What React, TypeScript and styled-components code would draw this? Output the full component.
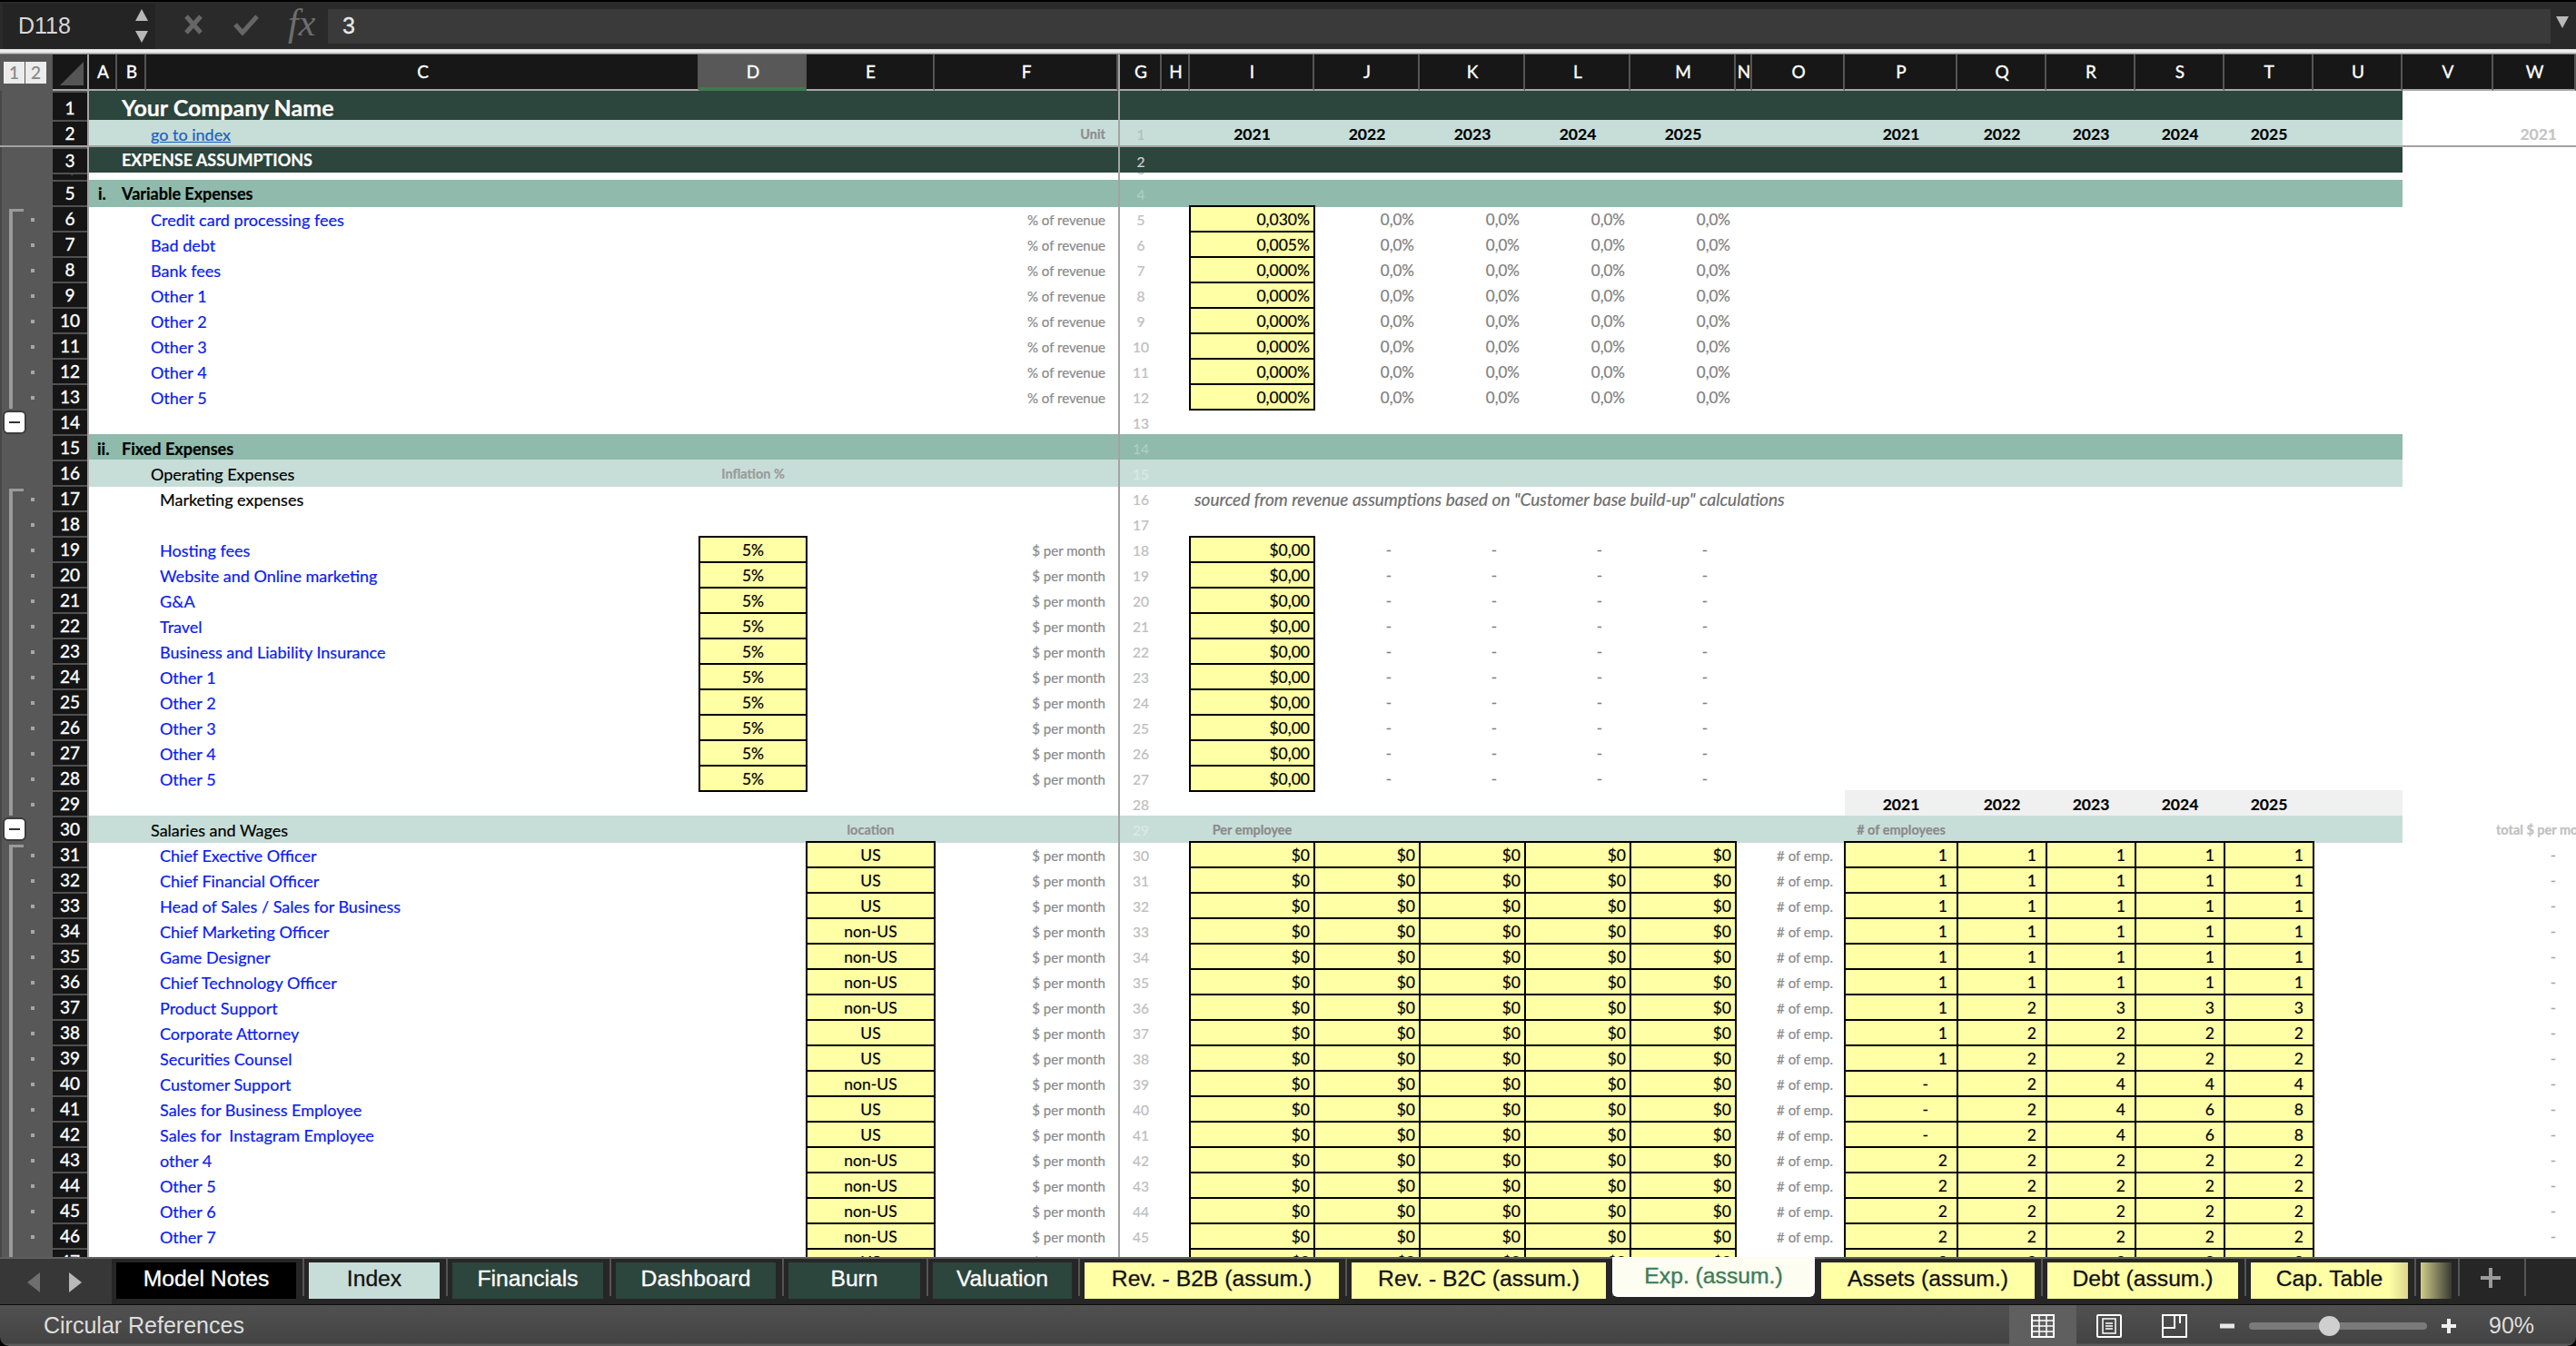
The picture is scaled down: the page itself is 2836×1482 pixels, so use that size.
import React from 'react'
import styled, { createGlobalStyle } from 'styled-components'

const COLS = `[gut] 58px [num] 38px [seam] 2px [A] 31px [B] 32px [C] 609px [D] 118px [E] 141px [F] 202px [G] 48px [H] 31px [I] 137px [J] 116px [K] 116px [L] 116px [M] 116px [N] 18px [O] 102px [P] 124px [Q] 98px [R] 98px [S] 98px [T] 98px [U] 98px [V] 100px [W] 91px [end]`
const LETTERS = 'ABCDEFGHIJKLMNOPQRSTUVW'.split('')
const SHEET_FONT = `Lato, 'Noto Sans', sans-serif`
const UI_FONT = `'Liberation Sans', Arial, sans-serif`

const DARK = '#2c453d'
const MID = '#8fbaac'
const PALE = '#c7ded8'
const YELLOW = '#ffffa6'
const GUTTER = '#585858'

const Global = createGlobalStyle`
  html, body { margin: 0; padding: 0; background: #000; }
  * { box-sizing: border-box; }
`

const Page = styled.div`
  width: 2836px;
  height: 1482px;
  display: flex;
  flex-direction: column;
  overflow: hidden;
  background: #000;
`

/* formula bar */
const FormulaBar = styled.div`
  height: 52px;
  margin-top: 2px;
  display: flex;
  background: #2a2a2a;
  flex: none;
`
const NameBox = styled.div`
  width: 168px;
  margin: 2px 4px 0 3px;
  display: flex;
  align-items: center;
  justify-content: space-between;
  padding: 0 8px 2px 17px;
  background: #242424;
  color: #d8d8d8;
  font: 25px ${UI_FONT};
`
const Stepper = styled.div`
  display: flex;
  flex-direction: column;
  gap: 11px;
`
const FormulaTools = styled.div`
  width: 186px;
  display: flex;
  align-items: center;
  padding: 0 0 2px 28px;
  gap: 34px;
  flex: none;
`
const FxMark = styled.span`
  font: italic 42px/42px 'Liberation Serif', serif;
  color: #6e6e6e;
  margin: -4px 0 0 -2px;
`
const FormulaInput = styled.div`
  width: 2447px;
  height: 38px;
  margin-top: 8px;
  padding-left: 16px;
  background: #3a3a3a;
  color: #e8e8e8;
  font: 25px/36px ${UI_FONT};
  -webkit-text-stroke: 0.3px #e8e8e8;
`
const Expander = styled.div`
  flex: 1;
  display: flex;
  align-items: center;
  justify-content: center;
  padding: 0 2px 8px 0;
`
const WhiteRule = styled.div`
  height: 6px;
  flex: none;
  background: linear-gradient(#dcdcdc 0, #f4f4f4 40%, #bdbdbd 85%, #2a2a2a 100%);
`

/* grid */
const Sheet = styled.div`
  height: 1324px;
  flex: none;
  overflow: hidden;
  background: #fff;
  font-family: ${SHEET_FONT};
  font-size: 18px;
  -webkit-text-stroke: 0.2px;
`
const Line = styled.div<{ $h: number }>`
  display: grid;
  grid-template-columns: ${COLS};
  grid-template-rows: ${p => p.$h}px;
  height: ${p => p.$h}px;
`
const GutterCell = styled.div<{ $mark?: string }>`
  grid-column: gut;
  grid-row: 1;
  position: relative;
  background: ${GUTTER};
  border-left: 2px solid #474747;
  ${p => p.$mark === 'start' && `
    &::before {
      content: '';
      position: absolute;
      left: 8px;
      top: 4px;
      bottom: 0;
      width: 12px;
      border-left: 4px solid #9a9a9a;
      border-top: 3px solid #9a9a9a;
    }
  `}
  ${p => p.$mark === 'line' && `
    &::before {
      content: '';
      position: absolute;
      left: 8px;
      top: 0;
      bottom: 0;
      border-left: 4px solid #9a9a9a;
    }
  `}
  ${p => (p.$mark === 'start' || p.$mark === 'line') && `
    &::after {
      content: '';
      position: absolute;
      left: 32px;
      top: 14px;
      width: 4px;
      height: 4px;
      background: #a6a6a6;
    }
  `}
`
const CollapseBtn = styled.div`
  position: absolute;
  left: 3px;
  top: 4px;
  width: 22px;
  height: 22px;
  border-radius: 4px;
  background: #fff;
  box-shadow: 0 0 0 2px #3c3c3c;
  display: flex;
  align-items: center;
  justify-content: center;
  &::before {
    content: '';
    width: 12px;
    height: 2px;
    background: #333;
  }
`
const RowNumber = styled.div`
  grid-column: num;
  grid-row: 1;
  background: #151515;
  border-top: 2px solid #505050;
  color: #fff;
  text-align: center;
  font-size: 19px;
  line-height: 26px;
  display: flex;
  align-items: flex-end;
  justify-content: center;
  overflow: hidden;
  -webkit-text-stroke: 0.35px #fff;
`
const Seam = styled.div`
  grid-column: seam;
  grid-row: 1;
  background: #a3a3a3;
`
const Fill = styled.div<{ $color: string; $from?: string; $grow?: boolean }>`
  grid-column: ${p => p.$from || 'A'} / V;
  grid-row: 1;
  background: ${p => p.$color};
  ${p => p.$grow && `box-shadow: 0 2px 0 ${p.$color};`}
`
const RowIndex = styled.div<{ $tone: string }>`
  grid-column: G;
  grid-row: 1;
  border-left: 2px solid #a3a3a3;
  color: ${p => p.$tone};
  font-size: 15.5px;
  line-height: 24px;
  display: flex;
  align-items: flex-end;
  justify-content: center;
  overflow: hidden;
`
const Cell = styled.div<{ $col: string; $span?: number; $align?: string; $color?: string; $pad?: number; $weight?: number; $size?: number; $lift?: number; $italic?: boolean; $under?: boolean }>`
  grid-column: ${p => p.$col} / span ${p => p.$span || 1};
  grid-row: 1;
  display: flex;
  align-items: flex-end;
  justify-content: ${p => p.$align || 'flex-start'};
  padding: 0 ${p => (p.$align === 'flex-end' ? p.$pad || 0 : 0)}px ${p => p.$lift || 0}px ${p => (p.$align === 'flex-end' ? 0 : p.$pad || 0)}px;
  color: ${p => p.$color || '#000'};
  font-weight: ${p => p.$weight || 400};
  font-size: ${p => p.$size || 18}px;
  font-style: ${p => (p.$italic ? 'italic' : 'normal')};
  text-decoration: ${p => (p.$under ? 'underline' : 'none')};
  line-height: 24px;
  white-space: pre;
`
const InputCell = styled.div<{ $col: string; $center?: boolean; $pad?: number }>`
  grid-column: ${p => p.$col};
  grid-row: 1;
  margin: 0 -1px -2px -1px;
  border: 2px solid #000;
  background: ${YELLOW};
  color: #000;
  display: flex;
  align-items: flex-end;
  justify-content: ${p => (p.$center ? 'center' : 'flex-end')};
  padding: 0 ${p => (p.$center ? 0 : p.$pad || 4)}px 0 0;
  line-height: 24px;
  font-size: 17.5px;
  white-space: nowrap;
`

/* column headers */
const HeadRow = styled.div`
  display: grid;
  grid-template-columns: ${COLS};
  grid-template-rows: 40px;
  height: 40px;
`
const OutlineLevels = styled.div`
  grid-column: gut;
  background: ${GUTTER};
  padding: 8px 0 0 4px;
  display: flex;
  gap: 1px;
  align-items: flex-start;
`
const LevelBtn = styled.div`
  width: 23px;
  height: 24px;
  background: #ececec;
  color: #858585;
  text-align: center;
  font: 19px/24px ${SHEET_FONT};
`
const CornerCell = styled.div`
  grid-column: num;
  background: #171717;
  border-bottom: 2px solid #a8a8a8;
  padding: 8px 0 0 8px;
`
const HeadCell = styled.div<{ $active?: boolean; $left?: boolean }>`
  background: ${p => (p.$active ? '#585858' : '#171717')};
  border-right: 2px solid #555;
  border-left: ${p => (p.$left ? '2px solid #a3a3a3' : 'none')};
  border-bottom: ${p => (p.$active ? '4px solid #3f7a4e' : '2px solid #a8a8a8')};
  color: #fff;
  font-size: 19px;
  display: flex;
  align-items: center;
  justify-content: center;
  padding: 0 0 ${p => (p.$active ? 0 : 2)}px 2px;
  -webkit-text-stroke: 0.35px #fff;
`
const FreezeRule = styled.div`
  height: 2px;
  background: #a3a3a3;
`

/* sheet tabs */
const TabBar = styled.div`
  height: 53px;
  flex: none;
  display: flex;
  background: #262626;
  border-top: 2px solid #5f5f5f;
  border-bottom: 1px solid #0c0c0c;
`
const NavArea = styled.div`
  width: 123px;
  flex: none;
  background: #373737;
  display: flex;
  align-items: center;
  padding: 2px 0 0 30px;
  gap: 32px;
`
const TabSlot = styled.div`
  display: flex;
  padding-left: 5px;
  flex: none;
`
const Tab = styled.div<{ $w: number; $bg: string; $fg: string }>`
  width: ${p => p.$w}px;
  height: 40px;
  margin: 4px 7px 0 0;
  padding-bottom: 4px;
  background: ${p => p.$bg};
  color: ${p => p.$fg};
  font: 24.7px ${UI_FONT};
  -webkit-text-stroke: 0.3px ${p => p.$fg};
  display: flex;
  align-items: center;
  justify-content: center;
  white-space: nowrap;
  overflow: hidden;
`
const TabRule = styled.div`
  width: 2px;
  height: 41px;
  background: #555;
`
const ActiveTab = styled.div`
  width: 223px;
  height: 44px;
  margin: -2px 2px 0 -2px;
  flex: none;
  background: #fdfdf2;
  border: 3px solid #fff;
  border-top: none;
  border-radius: 0 0 6px 6px;
  color: #3f7d57;
  font: 24.7px ${UI_FONT};
  -webkit-text-stroke: 0.4px #3f7d57;
  display: flex;
  align-items: center;
  justify-content: center;
  position: relative;
`
const AddSheet = styled.div`
  width: 73px;
  height: 41px;
  flex: none;
  display: flex;
  align-items: center;
  justify-content: center;
  border-right: 2px solid #555;
  padding-right: 4px;
`

/* status bar */
const StatusBar = styled.div`
  height: 45px;
  flex: none;
  display: flex;
  align-items: stretch;
  background: linear-gradient(#515151, #434343 94%, #5a5a5a 95%);
  border-radius: 0 0 10px 10px;
  color: #dedede;
  font: 25px ${UI_FONT};
`
const StatusText = styled.div`
  flex: 1;
  padding-left: 48px;
  display: flex;
  align-items: center;
`
const StatusTools = styled.div`
  width: 624px;
  display: flex;
  align-items: center;
`
const ViewBtn = styled.div<{ $active?: boolean; $w: number }>`
  width: ${p => p.$w}px;
  align-self: stretch;
  background: ${p => (p.$active ? '#5f5f5f' : 'transparent')};
  display: flex;
  align-items: center;
  justify-content: center;
`
const ZoomGlyph = styled.div<{ $ml: number }>`
  margin-left: ${p => p.$ml}px;
  display: flex;
`
const SliderTrack = styled.div`
  width: 196px;
  height: 8px;
  margin-left: 16px;
  border-radius: 4px;
  background: #7a7a7a;
  position: relative;
`
const SliderThumb = styled.div`
  position: absolute;
  left: 77px;
  top: -7px;
  width: 23px;
  height: 22px;
  border-radius: 50%;
  background: #cfcfcf;
`
const ZoomLabel = styled.div`
  margin-left: 36px;
`

const Triangle = ({ up, color = '#b8b8b8', w = 14, h = 13 }: { up?: boolean; color?: string; w?: number; h?: number }) => (
  <svg width={w} height={h} viewBox="0 0 14 13">
    <path d={up ? 'M7 0 L14 13 L0 13 Z' : 'M0 0 L14 0 L7 13 Z'} fill={color} />
  </svg>
)

const PagerArrow = ({ left, color }: { left?: boolean; color: string }) => (
  <svg width="14" height="22" viewBox="0 0 14 22">
    <path d={left ? 'M14 0 L14 22 L0 11 Z' : 'M0 0 L0 22 L14 11 Z'} fill={color} />
  </svg>
)

interface RowProps {
  n: number
  h?: number
  band?: string
  grow?: boolean
  mark?: string
  minus?: boolean
  tone?: string
  children?: React.ReactNode
}

const SheetRow = ({ n, h = 28, band, grow, mark, minus, tone = '#bdbdbd', children }: RowProps) => (
  <Line $h={h}>
    <GutterCell $mark={mark}>{minus && <CollapseBtn />}</GutterCell>
    <RowNumber>{n}</RowNumber>
    <Seam />
    {band && <Fill $color={band} $grow={grow} />}
    {n > 1 ? <RowIndex $tone={tone}>{n - 1}</RowIndex> : <RowIndex $tone={tone} />}
    {children}
  </Line>
)

const Unit = ({ children }: { children: React.ReactNode }) => (
  <Cell $col="F" $align="flex-end" $pad={14} $size={15} $color="#8a8a8a">{children}</Cell>
)

const YEARS = ['2021', '2022', '2023', '2024', '2025']
const VALUE_COLS = ['J', 'K', 'L', 'M']
const RATE_COLS = ['I', 'J', 'K', 'L', 'M']
const STAFF_COLS = ['P', 'Q', 'R', 'S', 'T']

const variable = [
  ['Credit card processing fees', '0,030%'],
  ['Bad debt', '0,005%'],
  ['Bank fees', '0,000%'],
  ['Other 1', '0,000%'],
  ['Other 2', '0,000%'],
  ['Other 3', '0,000%'],
  ['Other 4', '0,000%'],
  ['Other 5', '0,000%'],
]

const fixed = ['Hosting fees', 'Website and Online marketing', 'G&A', 'Travel', 'Business and Liability Insurance', 'Other 1', 'Other 2', 'Other 3', 'Other 4', 'Other 5']

const staff: [string, string, (number | string)[]][] = [
  ['Chief Exective Officer', 'US', [1, 1, 1, 1, 1]],
  ['Chief Financial Officer', 'US', [1, 1, 1, 1, 1]],
  ['Head of Sales / Sales for Business', 'US', [1, 1, 1, 1, 1]],
  ['Chief Marketing Officer', 'non-US', [1, 1, 1, 1, 1]],
  ['Game Designer', 'non-US', [1, 1, 1, 1, 1]],
  ['Chief Technology Officer', 'non-US', [1, 1, 1, 1, 1]],
  ['Product Support', 'non-US', [1, 2, 3, 3, 3]],
  ['Corporate Attorney', 'US', [1, 2, 2, 2, 2]],
  ['Securities Counsel', 'US', [1, 2, 2, 2, 2]],
  ['Customer Support', 'non-US', ['-', 2, 4, 4, 4]],
  ['Sales for Business Employee', 'US', ['-', 2, 4, 6, 8]],
  ['Sales for  Instagram Employee', 'US', ['-', 2, 4, 6, 8]],
  ['other 4', 'non-US', [2, 2, 2, 2, 2]],
  ['Other 5', 'non-US', [2, 2, 2, 2, 2]],
  ['Other 6', 'non-US', [2, 2, 2, 2, 2]],
  ['Other 7', 'non-US', [2, 2, 2, 2, 2]],
  ['Other 8', 'US', [2, 2, 2, 2, 2]],
]

const tabs = [
  { name: 'Model Notes', w: 198, bg: '#000', fg: '#fff' },
  { name: 'Index', w: 144, bg: PALE, fg: '#111' },
  { name: 'Financials', w: 166, bg: DARK, fg: '#fff' },
  { name: 'Dashboard', w: 176, bg: DARK, fg: '#fff' },
  { name: 'Burn', w: 145, bg: DARK, fg: '#fff' },
  { name: 'Valuation', w: 153, bg: DARK, fg: '#fff' },
  { name: 'Rev. - B2B (assum.)', w: 280, bg: YELLOW, fg: '#111' },
  { name: 'Rev. - B2C (assum.)', w: 280, bg: YELLOW, fg: '#111' },
]
const tabsAfter = [
  { name: 'Assets (assum.)', w: 235, bg: YELLOW, fg: '#111' },
  { name: 'Debt (assum.)', w: 210, bg: YELLOW, fg: '#111' },
  { name: 'Cap. Table', w: 173, bg: `linear-gradient(90deg, ${YELLOW} 88%, #d8d68e 100%)`, fg: '#111' },
  { name: '', w: 34, bg: `linear-gradient(90deg, #cfcd8a, #3a3a33)`, fg: '#111' },
]

export default function App() {
  return (
    <Page>
      <Global />
      <FormulaBar>
        <NameBox>
          D118
          <Stepper>
            <Triangle up />
            <Triangle />
          </Stepper>
        </NameBox>
        <FormulaTools>
          <svg width="20" height="22" viewBox="0 0 20 22">
            <path d="M2 2 L18 20 M18 2 L2 20" stroke="#666" strokeWidth="5" />
          </svg>
          <svg width="28" height="24" viewBox="0 0 28 24">
            <path d="M2 12 L10 21 L26 3" stroke="#666" strokeWidth="5" fill="none" />
          </svg>
          <FxMark>fx</FxMark>
        </FormulaTools>
        <FormulaInput>3</FormulaInput>
        <Expander>
          <Triangle />
        </Expander>
      </FormulaBar>
      <WhiteRule />

      <Sheet>
        <HeadRow>
          <OutlineLevels>
            <LevelBtn>1</LevelBtn>
            <LevelBtn>2</LevelBtn>
          </OutlineLevels>
          <CornerCell>
            <svg width="26" height="26" viewBox="0 0 26 26">
              <path d="M26 0 L26 26 L0 26 Z" fill="#555" />
            </svg>
          </CornerCell>
          <Seam />
          {LETTERS.map(letter => (
            <HeadCell key={letter} $active={letter === 'D'} $left={letter === 'G'}>{letter}</HeadCell>
          ))}
        </HeadRow>

        <SheetRow n={1} h={32} band={DARK} tone="#ccc">
          <Cell $col="B" $span={2} $pad={5} $size={25} $weight={700} $color="#fff" $lift={2}>Your Company Name</Cell>
        </SheetRow>
        <SheetRow n={2} band={PALE} tone="#aebfba">
          <Cell $col="C" $pad={5} $color="#1a5fc4" $under>go to index</Cell>
          <Cell $col="F" $align="flex-end" $pad={14} $size={14.5} $weight={700} $color="#8d8d8d">Unit</Cell>
          {YEARS.map((y, i) => (
            <Cell key={y} $col={RATE_COLS[i]} $align="center" $weight={700} $size={17.5}>{y}</Cell>
          ))}
          {YEARS.map((y, i) => (
            <Cell key={y} $col={STAFF_COLS[i]} $align="center" $weight={700} $size={17.5}>{y}</Cell>
          ))}
          <Cell $col="W" $align="flex-end" $pad={21} $weight={700} $size={17.5} $color="#c4c4c4">2021</Cell>
        </SheetRow>
        <FreezeRule />
        <SheetRow n={3} band={DARK} tone="#d0d0d0">
          <Cell $col="B" $span={2} $pad={5} $weight={700} $color="#fff" $lift={2}>EXPENSE ASSUMPTIONS</Cell>
        </SheetRow>
        <SheetRow n={4} h={8} />
        <SheetRow n={5} band={MID} grow tone="#b0cdc4">
          <Cell $col="A" $pad={10} $weight={700} $lift={1}>i.</Cell>
          <Cell $col="B" $span={2} $pad={5} $weight={700} $lift={1}>Variable Expenses</Cell>
        </SheetRow>

        {variable.map(([label, rate], i) => (
          <SheetRow key={i} n={6 + i} mark={i === 0 ? 'start' : 'line'}>
            <Cell $col="C" $pad={5} $color="#0a1cf0">{label}</Cell>
            <Unit>% of revenue</Unit>
            <InputCell $col="I">{rate}</InputCell>
            {VALUE_COLS.map(c => (
              <Cell key={c} $col={c} $align="flex-end" $pad={6} $size={17} $color="#808080">0,0%</Cell>
            ))}
          </SheetRow>
        ))}
        <SheetRow n={14} minus />

        <SheetRow n={15} band={MID} tone="#b0cdc4">
          <Cell $col="A" $pad={9} $weight={700}>ii.</Cell>
          <Cell $col="B" $span={2} $pad={5} $weight={700}>Fixed Expenses</Cell>
        </SheetRow>
        <SheetRow n={16} band={PALE} grow tone="#dbe9e5">
          <Cell $col="C" $pad={5}>Operating Expenses</Cell>
          <Cell $col="D" $align="center" $size={14.5} $weight={700} $color="#9a9a9a">Inflation %</Cell>
        </SheetRow>
        <SheetRow n={17} mark="start">
          <Cell $col="C" $pad={15}>Marketing expenses</Cell>
          <Cell $col="I" $span={9} $pad={5} $size={19} $italic $color="#6d6d6d">sourced from revenue assumptions based on "Customer base build-up" calculations</Cell>
        </SheetRow>
        <SheetRow n={18} mark="line" />
        {fixed.map((label, i) => (
          <SheetRow key={i} n={19 + i} mark="line">
            <Cell $col="C" $pad={15} $color="#0a1cf0">{label}</Cell>
            <InputCell $col="D" $center>5%</InputCell>
            <Unit>$ per month</Unit>
            <InputCell $col="I">$0,00</InputCell>
            {VALUE_COLS.map(c => (
              <Cell key={c} $col={c} $align="flex-end" $pad={31} $size={17} $color="#808080">-</Cell>
            ))}
          </SheetRow>
        ))}
        <SheetRow n={29} mark="line">
          <Fill $color="#f0f0f0" $from="P" />
          {YEARS.map((y, i) => (
            <Cell key={y} $col={STAFF_COLS[i]} $align="center" $weight={700} $size={17.5}>{y}</Cell>
          ))}
        </SheetRow>
        <SheetRow n={30} band={PALE} grow minus tone="#dbe9e5">
          <Cell $col="C" $pad={5}>Salaries and Wages</Cell>
          <Cell $col="E" $align="center" $size={14.5} $weight={700} $color="#8f8f8f">location</Cell>
          <Cell $col="I" $align="center" $size={14.5} $weight={700} $color="#8a8a8a">Per employee</Cell>
          <Cell $col="P" $align="center" $size={14.5} $weight={700} $color="#8a8a8a"># of employees</Cell>
          <Cell $col="W" $pad={3} $size={14.5} $weight={700} $color="#c0c0c0">total $ per month</Cell>
        </SheetRow>
        {staff.map(([label, place, counts], i) => (
          <SheetRow key={i} n={31 + i} mark={i === 0 ? 'start' : 'line'}>
            <Cell $col="C" $pad={15} $color="#0a1cf0">{label}</Cell>
            <InputCell $col="E" $center>{place}</InputCell>
            <Unit>$ per month</Unit>
            {RATE_COLS.map(c => (
              <InputCell key={c} $col={c}>$0</InputCell>
            ))}
            <Cell $col="O" $align="flex-end" $pad={13} $size={15} $color="#8a8a8a"># of emp.</Cell>
            {STAFF_COLS.map((c, j) => (
              <InputCell key={c} $col={c} $pad={counts[j] === '-' ? 31 : 10}>{counts[j]}</InputCell>
            ))}
            <Cell $col="W" $align="flex-end" $pad={22} $size={17} $color="#a8a8a8">-</Cell>
          </SheetRow>
        ))}
      </Sheet>

      <TabBar>
        <NavArea>
          <PagerArrow left color="#6f6f6f" />
          <PagerArrow color="#b8b8b8" />
        </NavArea>
        {tabs.map(t => (
          <TabSlot key={t.name}>
            <Tab $w={t.w} $bg={t.bg} $fg={t.fg}>{t.name}</Tab>
            <TabRule />
          </TabSlot>
        ))}
        <ActiveTab>Exp. (assum.)</ActiveTab>
        {tabsAfter.map((t, i) => (
          <TabSlot key={i}>
            <Tab $w={t.w} $bg={t.bg} $fg={t.fg}>{t.name}</Tab>
            <TabRule />
          </TabSlot>
        ))}
        <AddSheet>
          <svg width="22" height="22" viewBox="0 0 22 22">
            <path d="M11 0 V22 M0 11 H22" stroke="#9a9a9a" strokeWidth="4" />
          </svg>
        </AddSheet>
      </TabBar>

      <StatusBar>
        <StatusText>Circular References</StatusText>
        <StatusTools>
          <ViewBtn $active $w={74}>
            <svg width="26" height="26" viewBox="0 0 26 26">
              <rect x="1" y="1" width="24" height="24" fill="none" stroke="#fff" strokeWidth="2" />
              <path d="M9 1 V25 M17 1 V25 M1 7 H25 M1 13 H25 M1 19 H25" stroke="#fff" strokeWidth="1.5" />
            </svg>
          </ViewBtn>
          <ViewBtn $w={72}>
            <svg width="28" height="26" viewBox="0 0 28 26">
              <rect x="1" y="1" width="26" height="24" rx="1" fill="none" stroke="#fff" strokeWidth="2" />
              <rect x="7" y="5" width="14" height="16" fill="none" stroke="#fff" strokeWidth="1.5" />
              <path d="M10 10 H18 M10 13 H18 M10 16 H18" stroke="#fff" strokeWidth="1.5" />
            </svg>
          </ViewBtn>
          <ViewBtn $w={72}>
            <svg width="28" height="26" viewBox="0 0 28 26">
              <rect x="1" y="1" width="26" height="24" fill="none" stroke="#fff" strokeWidth="2" />
              <path d="M1 15 H14 V1 M20 1 V10" stroke="#fff" strokeWidth="2" fill="none" />
            </svg>
          </ViewBtn>
          <ZoomGlyph $ml={14}>
            <svg width="16" height="6" viewBox="0 0 16 6">
              <rect width="16" height="5" y="0.5" fill="#e8e8e8" />
            </svg>
          </ZoomGlyph>
          <SliderTrack>
            <SliderThumb />
          </SliderTrack>
          <ZoomGlyph $ml={16}>
            <svg width="16" height="16" viewBox="0 0 16 16">
              <path d="M8 0 V16 M0 8 H16" stroke="#f0f0f0" strokeWidth="4" />
            </svg>
          </ZoomGlyph>
          <ZoomLabel>90%</ZoomLabel>
        </StatusTools>
      </StatusBar>
    </Page>
  )
}
